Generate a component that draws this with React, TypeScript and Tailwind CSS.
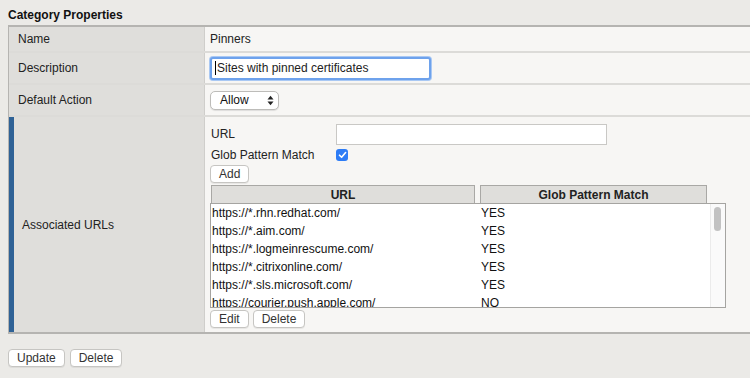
import React from "react";

const urls: [string, string][] = [
  ["https://*.rhn.redhat.com/", "YES"],
  ["https://*.aim.com/", "YES"],
  ["https://*.logmeinrescume.com/", "YES"],
  ["https://*.citrixonline.com/", "YES"],
  ["https://*.sls.microsoft.com/", "YES"],
  ["https://courier.push.apple.com/", "NO"],
];

function Btn({ children, className = "" }: { children: React.ReactNode; className?: string }) {
  return (
    <button
      className={
        "h-[18px] rounded-[4px] border border-[#c6c5c2] bg-white px-[8px] text-[12px] leading-[16px] text-[#333] shadow-[0_1px_0_rgba(0,0,0,0.06)] " +
        className
      }
    >
      {children}
    </button>
  );
}

export default function App() {
  return (
    <div
      className="h-[378px] w-[750px] overflow-hidden bg-[#ebeae7] pl-[8px] text-[12px] text-[#222]"
      style={{ fontFamily: '"Liberation Sans", Arial, Helvetica, sans-serif' }}
    >
      <div className="pt-[6px] text-[12px] font-bold leading-[18px] text-[#111]">Category Properties</div>
      <div className="mt-[1px] border-t-2 border-l border-[#b5b4b1] border-b-2">
        {/* Name */}
        <div className="flex h-[26px] border-b-2 border-[#dcdbd8]">
          <div className="flex w-[196px] items-center border-r border-[#cfcecb] bg-[#dfdedb] pl-[9px]">Name</div>
          <div className="flex flex-1 items-center bg-[#f7f6f4] pl-[5px]">Pinners</div>
        </div>
        {/* Description */}
        <div className="flex h-[32px] border-b-2 border-[#dcdbd8]">
          <div className="flex w-[196px] items-center border-r border-[#cfcecb] bg-[#dfdedb] pl-[9px]">Description</div>
          <div className="flex flex-1 items-center bg-[#f7f6f4] pl-[5px]">
            <div className="flex h-[23px] w-[221px] items-center rounded-[3px] border-2 border-[#6ea2ec] bg-white pl-[3px] shadow-[0_0_0_1px_#a9c8f3]">
              <span className="h-[14px] w-px bg-black" />
              <span className="pl-[1px]">Sites with pinned certificates</span>
            </div>
          </div>
        </div>
        {/* Default Action */}
        <div className="flex h-[32px] border-b-2 border-[#dcdbd8]">
          <div className="flex w-[196px] items-center border-r border-[#cfcecb] bg-[#dfdedb] pl-[9px]">Default Action</div>
          <div className="flex flex-1 items-center bg-[#f7f6f4] pl-[5px]">
            <div className="flex h-[19px] w-[69px] items-center justify-between rounded-[5px] border border-[#bdbcb9] bg-white pl-[9px] pr-[4px] shadow-[0_1px_1px_rgba(0,0,0,0.1)]">
              <span className="text-[#111]">Allow</span>
              <svg width="7" height="11" viewBox="0 0 7 11">
                <path d="M0.5 4.5 L3.5 0.8 L6.5 4.5 Z" fill="#222" />
                <path d="M0.5 6.5 L3.5 10.2 L6.5 6.5 Z" fill="#222" />
              </svg>
            </div>
          </div>
        </div>
        {/* Associated URLs */}
        <div className="flex h-[215px]">
          <div className="flex w-[196px] border-r border-[#cfcecb] bg-[#dfdedb]">
            <div className="w-[5px] bg-[#2f6296]" />
            <div className="flex flex-1 items-center pl-[8px]">Associated URLs</div>
          </div>
          <div className="flex flex-1 flex-col bg-[#f7f6f4] pl-[5px] pt-[6px]">
            <div className="flex h-[22px] items-center">
              <span className="w-[126px] pl-[1px]">URL</span>
              <div className="h-[21px] w-[271px] border border-[#c9c8c5] bg-white" />
            </div>
            <div className="flex h-[20px] items-center">
              <span className="w-[126px] pl-[1px]">Glob Pattern Match</span>
              <div className="flex h-[12px] w-[12px] items-center justify-center rounded-[3px] bg-[#2d7cf6]">
                <svg width="9" height="8" viewBox="0 0 9 8">
                  <path d="M1.5 4.2 L3.6 6.3 L7.6 1.5" fill="none" stroke="white" strokeWidth="1.6" strokeLinecap="round" strokeLinejoin="round" />
                </svg>
              </div>
            </div>
            <div className="flex">
              <Btn>Add</Btn>
            </div>
            <div className="mt-[2px] flex w-[516px] pl-[1px]">
              <div className="flex h-[18px] w-[264px] items-center justify-center border border-[#a9a8a5] border-b-0 bg-[#dfdedb] font-bold">URL</div>
              <div className="ml-[5px] flex h-[18px] w-[227px] items-center justify-center border border-[#a9a8a5] border-b-0 bg-[#dfdedb] font-bold">Glob Pattern Match</div>
            </div>
            <div className="relative h-[105px] w-[516px] overflow-hidden border border-[#a5a4a1] bg-white">
              {urls.map(([u, g]) => (
                <div key={u} className="flex h-[18px] items-center text-[#111]">
                  <span className="w-[270px] pl-[1px]">{u}</span>
                  <span>{g}</span>
                </div>
              ))}
              <div className="absolute right-0 top-0 h-full w-[15px] border-l border-[#ebebeb] bg-[#fafafa]">
                <div className="ml-[3px] mt-[3px] h-[24px] w-[7px] rounded-full bg-[#c2c2c2]" />
              </div>
            </div>
            <div className="mt-[2px] flex gap-[4px]">
              <Btn>Edit</Btn>
              <Btn>Delete</Btn>
            </div>
          </div>
        </div>
      </div>
      <div className="mt-[15px] flex gap-[5px]">
        <Btn>Update</Btn>
        <Btn>Delete</Btn>
      </div>
    </div>
  );
}
